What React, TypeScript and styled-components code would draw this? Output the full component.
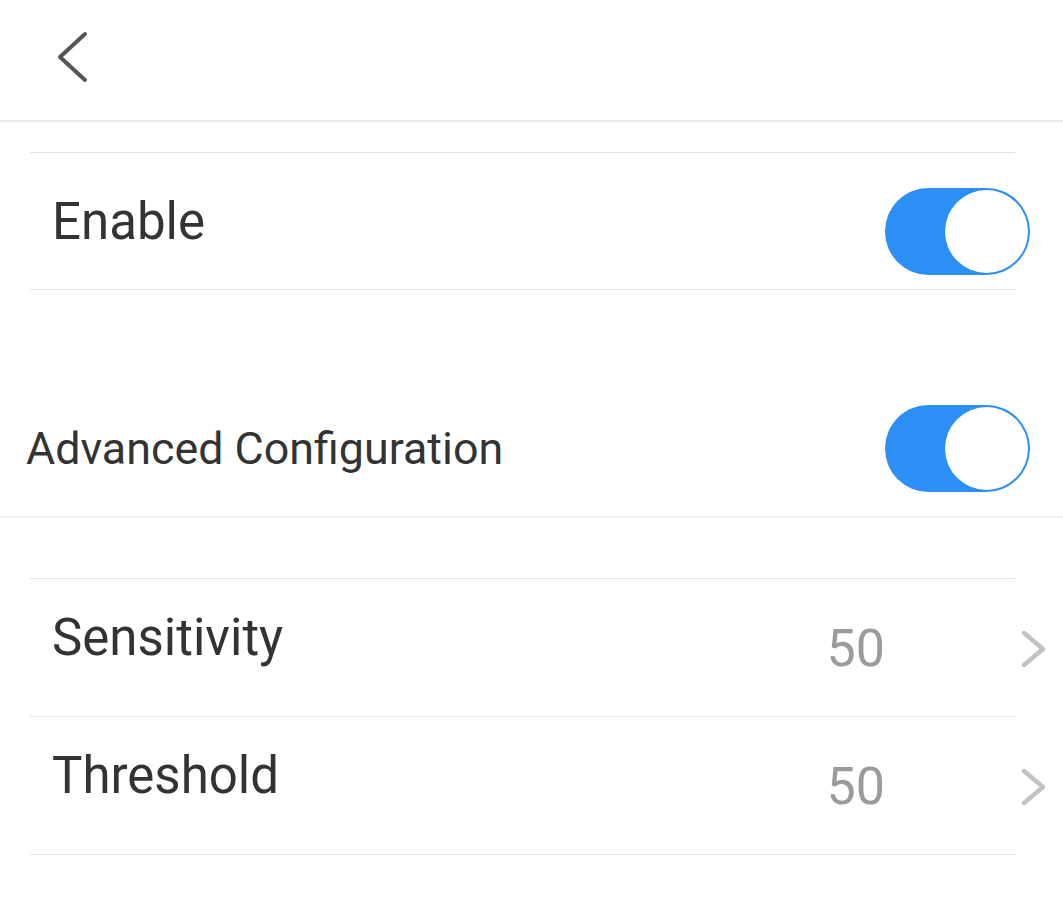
import { createGlobalStyle, styled } from "styled-components";

const GlobalStyle = createGlobalStyle`
  html, body {
    margin: 0;
    padding: 0;
    background: #ffffff;
    font-family: Roboto, "Noto Sans", "Liberation Sans", sans-serif;
  }
`;

const Page = styled.div`
  display: flex;
  flex-direction: column;
  width: 100%;
  min-height: 901px;
  background: #ffffff;
`;

const Header = styled.header`
  display: flex;
  align-items: flex-start;
  height: 122px;
  padding: 31px 0 0 56px;
  box-sizing: border-box;
  border-bottom: 2px solid #ebebeb;
`;

const BackButton = styled.button`
  display: flex;
  padding: 0;
  border: none;
  background: transparent;
  cursor: pointer;
`;

const Divider = styled.div<{ $full?: boolean }>`
  height: ${(p) => (p.$full ? "2px" : "1px")};
  background: ${(p) => (p.$full ? "#ededed" : "#e4e4e4")};
  margin: ${(p) => (p.$full ? "0" : "0 48px 0 30px")};
`;

const Gap = styled.div<{ $h: number }>`
  height: ${(p) => p.$h}px;
`;

const Row = styled.div<{ $indent?: number; $h?: number }>`
  display: flex;
  align-items: center;
  height: ${(p) => p.$h ?? 137}px;
  padding-left: ${(p) => p.$indent ?? 52}px;
  box-sizing: border-box;
`;

const Label = styled.span<{ $size?: number; $shift?: number }>`
  flex: 1;
  font-size: ${(p) => p.$size ?? 51}px;
  color: #333333;
  margin-bottom: ${(p) => p.$shift ?? 0}px;
  white-space: nowrap;
`;

const Toggle = styled.div<{ $drop?: number }>`
  display: flex;
  justify-content: flex-end;
  align-items: center;
  width: 145px;
  height: 87px;
  padding: 2px;
  box-sizing: border-box;
  margin-right: 33px;
  margin-top: ${(p) => p.$drop ?? 0}px;
  border-radius: 44px;
  background: #2b8ff6;
`;

const Knob = styled.div`
  width: 83px;
  height: 83px;
  border-radius: 50%;
  background: #ffffff;
`;

const Value = styled.span`
  font-size: 52px;
  color: #9b9b9b;
  margin-top: 2px;
`;

const Arrow = styled.svg`
  margin: 2px 17px 0 136px;
`;

const Switch = ({ drop }: { drop?: number }) => (
  <Toggle $drop={drop}>
    <Knob />
  </Toggle>
);

const ChevronRight = () => (
  <Arrow width="25" height="38" viewBox="0 0 25 38">
    <path d="M3 3 L22 19 L3 35" fill="none" stroke="#c2c2c2" strokeWidth="4.4" strokeLinecap="round" strokeLinejoin="round" />
  </Arrow>
);

const App = () => {
  const items = [
    { key: "sensitivity", text: "Sensitivity", value: 50 },
    { key: "threshold", text: "Threshold", value: 50 },
  ];
  return (
    <Page>
      <GlobalStyle />
      <Header>
        <BackButton aria-label="back">
          <svg width="32" height="52" viewBox="0 0 32 52">
            <path d="M29 3 L4 26 L29 49" fill="none" stroke="#555555" strokeWidth="4" strokeLinecap="round" strokeLinejoin="round" />
          </svg>
        </BackButton>
      </Header>
      <Gap $h={30} />
      <Divider />
      <Row $h={136}>
        <Label>Enable</Label>
        <Switch drop={20} />
      </Row>
      <Divider />
      <Gap $h={90} />
      <Row $indent={26} $h={136}>
        <Label $size={44.8}>Advanced Configuration</Label>
        <Switch />
      </Row>
      <Divider $full />
      <Gap $h={60} />
      <Divider />
      {items.map((el) => (
        <div key={el.key}>
          <Row>
            <Label $shift={20}>{el.text}</Label>
            <Value>{el.value}</Value>
            <ChevronRight />
          </Row>
          <Divider />
        </div>
      ))}
    </Page>
  );
};

export default App;
